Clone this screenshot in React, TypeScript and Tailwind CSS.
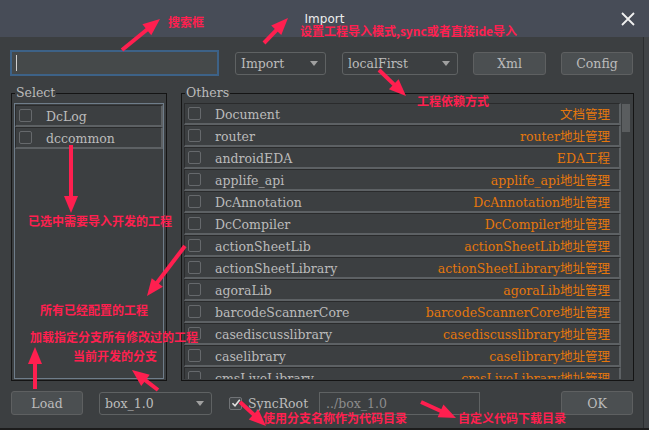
import React from 'react';

const serif = "font-['DejaVu_Serif','Noto_Sans_CJK_SC',serif]";

const others: [string, string][] = [
  ['Document', '文档管理'],
  ['router', 'router地址管理'],
  ['androidEDA', 'EDA工程'],
  ['applife_api', 'applife_api地址管理'],
  ['DcAnnotation', 'DcAnnotation地址管理'],
  ['DcCompiler', 'DcCompiler地址管理'],
  ['actionSheetLib', 'actionSheetLib地址管理'],
  ['actionSheetLibrary', 'actionSheetLibrary地址管理'],
  ['agoraLib', 'agoraLib地址管理'],
  ['barcodeScannerCore', 'barcodeScannerCore地址管理'],
  ['casediscusslibrary', 'casediscusslibrary地址管理'],
  ['caselibrary', 'caselibrary地址管理'],
  ['cmsLiveLibrary', 'cmsLiveLibrary地址管理'],
];

// red annotations drawn over the dialog
const arrows = [
  [122, 50, 160, 19],
  [264, 43, 288, 18],
  [379, 70, 406, 96],
  [71, 145, 71, 213],
  [185, 246, 147, 296],
  [35, 389, 35, 347],
  [158, 390, 132, 370],
  [240, 402, 266, 426],
  [421, 402, 456, 418],
];

const notes: { text: string; x: number; y: number }[] = [
  { text: '搜索框', x: 168, y: 22 },
  { text: '设置工程导入模式,sync或者直接ide导入', x: 300, y: 31 },
  { text: '工程依赖方式', x: 417, y: 101 },
  { text: '已选中需要导入开发的工程', x: 28, y: 221 },
  { text: '所有已经配置的工程', x: 40, y: 310 },
  { text: '加载指定分支所有修改过的工程', x: 30, y: 337 },
  { text: '当前开发的分支', x: 73, y: 356 },
  { text: '使用分支名称作为代码目录', x: 263, y: 418 },
  { text: '自定义代码下载目录', x: 458, y: 418 },
];

const Arrow = ({ a }: { a: number[] }) => {
  const [x1, y1, x2, y2] = a;
  const len = Math.hypot(x2 - x1, y2 - y1);
  const ux = (x2 - x1) / len;
  const uy = (y2 - y1) / len;
  const L = 17;
  const W = 7;
  const bx = x2 - ux * L;
  const by = y2 - uy * L;
  const pts = `${x2},${y2} ${bx - uy * W},${by + ux * W} ${bx + uy * W},${by - ux * W}`;
  return (
    <g>
      <line x1={x1} y1={y1} x2={bx + ux * 2} y2={by + uy * 2} stroke="#ff1f4f" strokeWidth={4} />
      <polygon points={pts} fill="#ff1f4f" />
    </g>
  );
};

const Check = () => (
  <span className="w-[13px] h-[13px] shrink-0 border border-[#66696c] rounded-[2px] bg-[#3c3f41]" />
);

const Row = ({ name, desc }: { name: string; desc?: string }) => (
  <div className="flex items-center h-[22px] shrink-0 border-t border-l border-t-[#2a2b2c] border-l-[#2a2b2c] border-b-2 border-r-2 border-b-[#5d6164] border-r-[#5d6164] pl-[3px] pr-[9px] bg-[#3c3f41]">
    <Check />
    <span className="ml-[14px] pt-[4px] text-[#bbbbbb] whitespace-nowrap">{name}</span>
    {desc && <span className="ml-auto pt-[4px] text-[#e5770d] whitespace-nowrap">{desc}</span>}
  </div>
);

const Combo = ({ label, w }: { label: string; w: string }) => (
  <div className={`${w} h-[23px] flex items-center border border-[#5f6263] rounded-[3px] bg-[#3c3f41] pl-[5px] pr-[7px] text-[#bbbbbb]`}>
    <span className="pt-[2px]">{label}</span>
    <span className="ml-auto w-0 h-0 border-l-[4px] border-r-[4px] border-t-[5px] border-l-transparent border-r-transparent border-t-[#a0a0a0]" />
  </div>
);

const Button = ({ label, w }: { label: string; w: string }) => (
  <div className={`${w} h-[23px] flex items-center justify-center border border-[#5e6061] rounded-[3px] bg-[#4b4f51] text-[#bbbbbb]`}>
    <span className="pt-[3px]">{label}</span>
  </div>
);

export default function App() {
  return (
    <div className={`relative w-[649px] h-[430px] overflow-hidden bg-[#3c3f41] flex flex-col text-[12.5px] ${serif}`}>
      <div className="relative h-[37px] shrink-0 bg-[#474c57] flex items-center justify-center">
        <span className="font-['DejaVu_Sans',sans-serif] text-[12px] text-[#eeeeee]">Import</span>
        <svg className="absolute left-[621px] top-[12px]" width="14" height="14" viewBox="0 0 14 14">
          <path d="M1 1 L13 13 M13 1 L1 13" stroke="#f0f0f0" strokeWidth="1.8" />
        </svg>
      </div>

      <div className="flex flex-1">
        <div className="w-[643px] flex flex-col">
          {/* toolbar */}
          <div className="flex items-center mt-[13px] h-[26px]">
            <div className="ml-[10px] w-[209px] h-[26px] border-2 border-[#3d6287] bg-[#45494a] flex items-center pl-[4px]">
              <span className="w-px h-[16px] bg-[#d0d0d0]" />
            </div>
            <div className="ml-[16px]"><Combo label="Import" w="w-[91px]" /></div>
            <div className="ml-[16px]"><Combo label="localFirst" w="w-[116px]" /></div>
            <div className="ml-[15px]"><Button label="Xml" w="w-[73px]" /></div>
            <div className="ml-[15px]"><Button label="Config" w="w-[72px]" /></div>
          </div>

          {/* group boxes */}
          <div className="flex mt-[17px] h-[288px]">
            <div className="relative ml-[11px] w-[156px] h-full border border-[#141414] px-[2px] pt-[9px] pb-[1px]">
              <span className="absolute left-[3px] -top-[8px] px-[1px] bg-[#3c3f41] text-[#bbbbbb] leading-[14px]">Select</span>
              <div className="h-full border border-[#6f7d8a] pt-[1px] flex flex-col">
                <Row name="DcLog" />
                <Row name="dccommon" />
              </div>
            </div>
            <div className="relative ml-[14px] w-[453px] h-full border border-[#141414] pl-[2px] pr-[2px] pt-[9px] pb-[1px] flex">
              <span className="absolute left-[3px] -top-[8px] px-[1px] bg-[#3c3f41] text-[#bbbbbb] leading-[14px]">Others</span>
              <div className="w-[437px] h-full overflow-hidden flex flex-col">
                {others.map(([n, d]) => (
                  <Row key={n} name={n} desc={d} />
                ))}
              </div>
              <div className="w-[10px] h-full pt-[1px]">
                <div className="ml-[1px] w-[8px] h-[28px] bg-[#5a5d5f]" />
              </div>
            </div>
          </div>

          {/* bottom row */}
          <div className="flex items-center mt-[10px] h-[24px]">
            <div className="ml-[11px]"><Button label="Load" w="w-[72px] h-[24px]" /></div>
            <div className="ml-[16px]"><Combo label="box_1.0" w="w-[113px]" /></div>
            <span className="ml-[17px] w-[13px] h-[13px] border border-[#707376] rounded-[2px] bg-[#43474a] flex items-center justify-center">
              <svg width="10" height="10" viewBox="0 0 10 10">
                <path d="M1.5 5.2 L4 7.8 L8.8 1.8" stroke="#e0e0e0" strokeWidth="1.6" fill="none" />
              </svg>
            </span>
            <span className="ml-[6px] w-[71px] pt-[3px] text-[#bbbbbb]">SyncRoot</span>
            <div className="w-[161px] h-[23px] border border-[#5f6263] bg-[#3c3f41] flex items-center pl-[6px] text-[#8c8c8c]">
              <span className="pt-[3px]">../box_1.0</span>
            </div>
            <div className="ml-auto mr-[10px]"><Button label="OK" w="w-[72px] h-[24px]" /></div>
          </div>
        </div>
        <div className="flex-1 border-l border-[#2c2e30] bg-[#414447]" />
      </div>
      <div className="h-[2px] shrink-0 bg-[#1c1c1c]" />

      <svg className="absolute inset-0 pointer-events-none" width="649" height="430">
        {arrows.map((a, i) => (
          <Arrow key={i} a={a} />
        ))}
      </svg>
      {notes.map((n) => (
        <span
          key={n.text}
          className="absolute whitespace-nowrap font-['Noto_Sans_CJK_SC',sans-serif] font-bold text-[12px] leading-[12px] text-[#ff1f4f]"
          style={{ left: n.x, top: n.y - 6 }}
        >
          {n.text}
        </span>
      ))}
    </div>
  );
}
